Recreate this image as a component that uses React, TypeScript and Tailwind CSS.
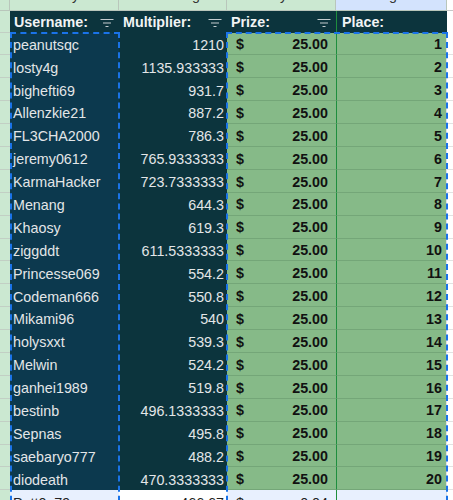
import React from "react";

// Leaderboard sheet: usernames, multipliers, prize and place columns.
const rows: [string, string][] = [
  ["peanutsqc", "1210"],
  ["losty4g", "1135.933333"],
  ["bighefti69", "931.7"],
  ["Allenzkie21", "887.2"],
  ["FL3CHA2000", "786.3"],
  ["jeremy0612", "765.9333333"],
  ["KarmaHacker", "723.7333333"],
  ["Menang", "644.3"],
  ["Khaosy", "619.3"],
  ["ziggddt", "611.5333333"],
  ["Princesse069", "554.2"],
  ["Codeman666", "550.8"],
  ["Mikami96", "540"],
  ["holysxxt", "539.3"],
  ["Melwin", "524.2"],
  ["ganhei1989", "519.8"],
  ["bestinb", "496.1333333"],
  ["Sepnas", "495.8"],
  ["saebaryo777", "488.2"],
  ["diodeath", "470.3333333"],
];

function FilterIcon() {
  return (
    <svg width="14" height="10" viewBox="0 0 14 10" className="shrink-0">
      <path d="M0.5 1.5h13M3 5h8M5.5 8.5h3" stroke="#c3cbcf" strokeWidth="1.2" fill="none" />
    </svg>
  );
}

function LeftStrip() {
  return <div className="w-[10px] shrink-0 bg-[#cbe8d1] border-b border-[#c2cfc4]" />;
}

function RightStrip() {
  return <div className="flex-1 bg-white border-b border-l border-[#e2e3e3]" />;
}

function HeaderCell({ label, filter, w }: { label: string; filter?: boolean; w: string }) {
  return (
    <div className={`${w} shrink-0 flex items-center justify-between pl-[4px] pr-[5px] pt-[2px]`}>
      <span className="font-bold text-[#f1f3f4]">{label}</span>
      {filter && <FilterIcon />}
    </div>
  );
}

export default function App() {
  return (
    <div className="relative w-[453px] h-[500px] overflow-hidden bg-white text-[14.3px] font-['Liberation_Sans',Arial,sans-serif]">
      {/* row above the header, only descenders visible */}
      <div className="flex h-[11px]">
        <div className="w-[10px] shrink-0 bg-[#cbe8d1] border-r border-b border-[#b9c6bb]" />
        <div className="w-[109px] shrink-0 bg-[#cbe8d1] border-r border-b border-[#b9c6bb] overflow-hidden">
          <div className="-mt-[13px] leading-4 pl-[62px] text-[#333]">y</div>
        </div>
        <div className="w-[108px] shrink-0 bg-[#cbe8d1] border-r border-b border-[#b9c6bb] overflow-hidden">
          <div className="-mt-[13px] leading-4 pl-[73px] text-[#333]">g</div>
        </div>
        <div className="w-[109px] shrink-0 bg-[#cbe8d1] border-r border-b border-[#b9c6bb] overflow-hidden">
          <div className="-mt-[13px] leading-4 pl-[53px] text-[#333]">y</div>
        </div>
        <div className="w-[111px] shrink-0 bg-[#d3e3fd] border-r border-b border-[#b9c6bb] overflow-hidden">
          <div className="-mt-[13px] leading-4 pl-[53px] text-[#333]">g</div>
        </div>
        <div className="flex-1 bg-white border-b border-[#c7c7c7]" />
      </div>

      {/* header */}
      <div className="flex h-[21.5px]">
        <LeftStrip />
        <div className="flex bg-[#0c343d]">
          <HeaderCell label="Username:" filter w="w-[109px]" />
          <HeaderCell label="Multiplier:" filter w="w-[108px]" />
          <HeaderCell label="Prize:" filter w="w-[109px]" />
          <div className="w-[111px] shrink-0 flex items-center pl-[5px] pt-[2px] border-l border-[#1e8e3e]">
            <span className="font-bold text-[#f1f3f4]">Place:</span>
          </div>
        </div>
        <div className="flex-1 bg-white" />
      </div>

      {/* data rows */}
      {rows.map(([name, mult], i) => (
        <div key={name} className="flex h-[22.9px]">
          <LeftStrip />
          <div className="w-[109px] shrink-0 bg-[#0c394e] flex items-center pt-[3px] pl-[3px] text-[#e3e6e8]">
            {name}
          </div>
          <div className="w-[108px] shrink-0 bg-[#0c343d] flex items-center justify-end pt-[3px] pr-[3px] text-[#e3e6e8]">
            {mult}
          </div>
          <div className="w-[109px] shrink-0 bg-[#86ba88] border-b border-[#74a678] flex items-center justify-between pt-[3px] pl-[9px] pr-[8px] font-bold text-[#111]">
            <span>$</span>
            <span>25.00</span>
          </div>
          <div className="w-[110px] shrink-0 bg-[#86ba88] border-b border-l border-[#74a678] border-l-[#1e8e3e] flex items-center justify-end pt-[3px] pr-[4px] font-bold text-[#111]">
            {i + 1}
          </div>
          <RightStrip />
        </div>
      ))}

      {/* next row, mostly cut off */}
      <div className="flex h-[22.9px]">
        <LeftStrip />
        <div className="w-[109px] shrink-0 bg-[#e8f0fe] flex items-center pt-[3px] pl-[3px] text-[#222]">
          Patt0_79
        </div>
        <div className="w-[108px] shrink-0 bg-white flex items-center justify-end pt-[3px] pr-[3px] text-[#222]">
          466.67
        </div>
        <div className="w-[109px] shrink-0 bg-[#e8f0fe] flex items-center justify-between pt-[3px] pl-[9px] pr-[8px] text-[#222]">
          <span>$</span>
          <span>0.04</span>
        </div>
        <div className="w-[110px] shrink-0 bg-[#e8f0fe] border-l border-[#1e8e3e]" />
        <RightStrip />
      </div>

      {/* copy selection marquees */}
      <div className="absolute left-[10px] top-[32px] w-[110px] h-[500px] border-2 border-dashed border-[#1a73e8]" />
      <div className="absolute left-[226px] top-[32px] w-[222px] h-[500px] border-2 border-dashed border-[#1a73e8]" />
    </div>
  );
}
